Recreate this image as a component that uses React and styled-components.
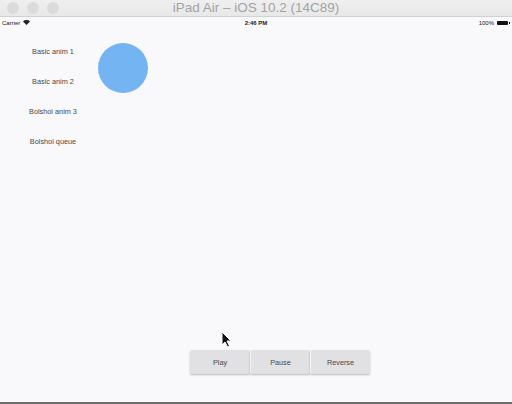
import styled, { createGlobalStyle } from 'styled-components';

const Global = createGlobalStyle`
  html, body {
    margin: 0;
    padding: 0;
    width: 512px;
    height: 404px;
    overflow: hidden;
    background: #f9f8fb;
    font-family: 'Liberation Sans', Arial, sans-serif;
    -webkit-font-smoothing: antialiased;
  }
`;

const Window = styled.div`
  position: relative;
  width: 512px;
  height: 404px;
  display: flex;
  flex-direction: column;
  background: #f9f8fb;
  border-bottom: 2px solid #6f6f6f;
  box-sizing: border-box;
`;

const TitleBar = styled.div`
  height: 16px;
  display: flex;
  align-items: center;
  position: relative;
  background: linear-gradient(#f0eff0, #e9e8e9);
  border-bottom: 1px solid #d2d1d2;
`;

const Lights = styled.div`
  display: flex;
  gap: 8px;
  padding-left: 7px;
`;

const Light = styled.span`
  width: 12px;
  height: 12px;
  border-radius: 50%;
  background: #dcdbdc;
`;

const Title = styled.div`
  position: absolute;
  left: 0;
  right: 0;
  text-align: center;
  font-size: 13.5px;
  color: #a3a3a3;
  line-height: 16px;
`;

const StatusBar = styled.div`
  height: 11px;
  display: flex;
  align-items: center;
  justify-content: space-between;
  padding: 0 4px 0 2px;
  font-size: 6px;
  color: #222;
  position: relative;
`;

const Side = styled.div`
  display: flex;
  align-items: center;
  gap: 3px;
`;

const Clock = styled.div`
  position: absolute;
  left: 0;
  right: 0;
  text-align: center;
  font-weight: bold;
`;

const Battery = styled.span`
  width: 11px;
  height: 4px;
  background: #111;
  border-radius: 1px;
  position: relative;
  &::after {
    content: '';
    position: absolute;
    right: -2px;
    top: 1px;
    width: 1px;
    height: 2px;
    background: #111;
  }
`;

const Content = styled.div`
  flex: 1;
  display: flex;
  flex-direction: column;
  justify-content: space-between;
`;

const Top = styled.div`
  display: flex;
  padding-top: 8px;
`;

const Menu = styled.div`
  width: 106px;
  display: flex;
  flex-direction: column;
`;

const MenuItem = styled.div`
  height: 30px;
  display: flex;
  align-items: center;
  justify-content: center;
  font-size: 7.3px;
  color: #4a4a4a;
`;

const Ball = styled.div`
  width: 50px;
  height: 50px;
  border-radius: 50%;
  background: #75b4f3;
  margin: 7px 0 0 -8px;
`;

const Controls = styled.div`
  display: flex;
  padding: 0 0 28px 190px;
`;

const Button = styled.div`
  box-sizing: border-box;
  width: 60px;
  height: 24px;
  display: flex;
  align-items: center;
  justify-content: center;
  background: #e1e0e2;
  font-size: 7.3px;
  color: #4a4a4a;
  border-radius: 2px;
  box-shadow: 0 1px 2px rgba(0, 0, 0, 0.25);
  & + & {
    border-left: 1px solid #f3f3f4;
  }
`;

const Cursor = styled.svg`
  position: absolute;
  left: 221px;
  top: 331px;
`;

export default function App() {
  return (
    <>
      <Global />
      <Window>
        <TitleBar>
          <Lights>
            <Light />
            <Light />
            <Light />
          </Lights>
          <Title>iPad Air – iOS 10.2 (14C89)</Title>
        </TitleBar>
        <StatusBar>
          <Side>
            Carrier
            <svg width="7" height="5" viewBox="0 0 14 10">
              <path d="M7 10 L0 3 A10 10 0 0 1 14 3 Z" fill="#222" />
            </svg>
          </Side>
          <Clock>2:46 PM</Clock>
          <Side>
            100%
            <Battery />
          </Side>
        </StatusBar>
        <Content>
          <Top>
            <Menu>
              <MenuItem>Basic anim 1</MenuItem>
              <MenuItem>Basic anim 2</MenuItem>
              <MenuItem>Bolshoi anim 3</MenuItem>
              <MenuItem>Bolshoi queue</MenuItem>
            </Menu>
            <Ball />
          </Top>
          <Controls>
            <Button>Play</Button>
            <Button>Pause</Button>
            <Button>Reverse</Button>
          </Controls>
        </Content>
        <Cursor width="12" height="17" viewBox="0 0 12 17">
          <path d="M1 1 L1 14 L4 11 L6.5 16 L8.5 15 L6 10 L10 10 Z" fill="#111" stroke="#fff" strokeWidth="1" />
        </Cursor>
      </Window>
    </>
  );
}
